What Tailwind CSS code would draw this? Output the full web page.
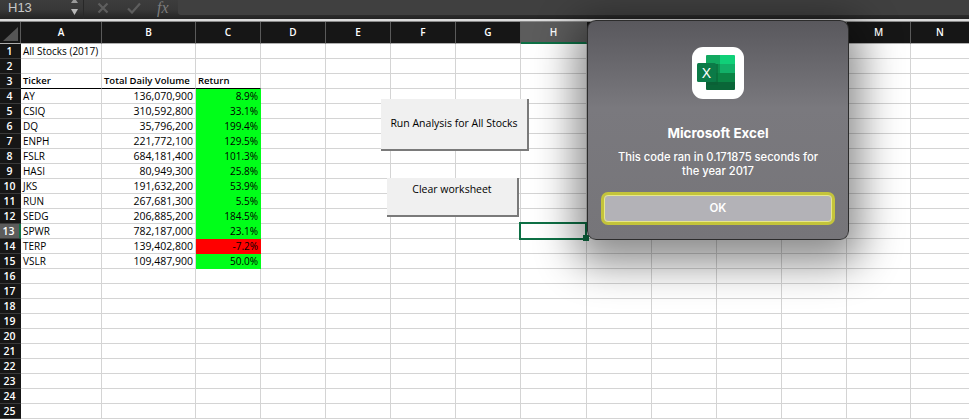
<!DOCTYPE html>
<html lang="en">
<head>
    <meta charset="UTF-8">
    <title>Microsoft Excel - All Stocks</title>
    <script src="https://cdn.jsdelivr.net/npm/@tailwindcss/browser@4"></script>
</head>
<body class="relative w-[969px] h-[419px] overflow-hidden bg-white font-['Open_Sans','Noto_Sans',sans-serif]">
    <!-- Formula bar -->
    <div class="flex items-stretch h-[19px] bg-gradient-to-b from-[#3d3d3d] via-[#383838] to-[#232323] text-[#c8c8c8]">
        <div class="w-[71px] pl-[8px] text-[13px] leading-[15px] font-['Liberation_Sans',sans-serif]">H13</div>
        <div class="flex flex-col items-center gap-[6px] w-[9px] ml-[-1px]">
            <svg class="mt-[-2px]" width="7" height="5" viewBox="0 0 7 5"><path d="M3.500 0L7 5H0z" fill="#9a9a9a"/></svg>
            <svg width="7" height="6" viewBox="0 0 7 6"><path d="M3.500 6L7 0H0z" fill="#b8b8b8"/></svg>
        </div>
        <div class="w-px ml-[4px] bg-[#282828]"></div>
        <div class="flex items-start w-[94px] pl-[13px]">
            <svg class="mt-[2px]" width="12" height="12" viewBox="0 0 12 12"><path d="M1.500 1.500L10.500 10.500M10.500 1.500L1.500 10.500" stroke="#5e5e5e" stroke-width="2.200" fill="none"/></svg>
            <svg class="mt-[2px] ml-[18px]" width="14" height="12" viewBox="0 0 14 12"><path d="M1 6.500L5 10.500L13 1.500" stroke="#5e5e5e" stroke-width="2.200" fill="none"/></svg>
            <span class="ml-[16px] text-[16px] leading-[16px] italic text-[#7c7c7c] font-['Liberation_Serif',serif]">fx</span>
        </div>
        <div class="flex-1 bg-[#404040] rounded-bl-[3px] mb-[4px]"></div>
    </div>
    <div class="h-[3px] bg-[#dcdcdc] border-b border-[#8a8a8a]"></div>

    <!-- Sheet -->
    <div id="sheet"></div>

    <!-- Shapes on the sheet -->
    <div class="absolute left-[381px] top-[99px] w-[148px] h-[52px] flex items-center justify-center bg-[#f0f0f0] border-r-2 border-b-2 border-[#7a7a7a] text-[10.500px] text-black">Run Analysis for All Stocks</div>
    <div class="absolute left-[387px] top-[178px] w-[132px] h-[39px] flex justify-center pt-[4px] bg-[#f0f0f0] border-r-2 border-b-2 border-[#7a7a7a] text-[10.500px] text-black">Clear worksheet</div>

    <!-- Active cell -->
    <div class="absolute left-[519px] top-[222px] w-[68px] h-[18px] border-2 border-[#0e7045]"></div>
    <div class="absolute left-[583px] top-[235px] w-[6px] h-[6px] bg-[#0e7045]"></div>

    <!-- Alert -->
    <div class="absolute left-[587px] top-[20px] w-[262px] h-[220px] flex flex-col items-center rounded-[9px] border border-[#2c2c2c] bg-gradient-to-b from-[#59585d] via-[#7a797e] via-40% to-[#767579] shadow-[0_12px_40px_12px_rgba(0,0,0,0.45)] text-white font-['Inter',sans-serif]">
        <div class="w-[52px] h-[52px] mt-[26px] rounded-[11px] bg-white">
            <svg width="52" height="52" viewBox="0 0 52 52">
                <path d="M14 9a1 1 0 0 1 1-1H28V17H14z" fill="#12a860"/>
                <path d="M28 8H42a1 1 0 0 1 1 1V17H28z" fill="#10d078"/>
                <path d="M14 17H28V26H14z" fill="#0e8e4e"/>
                <path d="M28 17H43V26H28z" fill="#12b068"/>
                <path d="M14 26H43V35H14z" fill="#0b8445"/>
                <path d="M14 35H43V42a1 1 0 0 1-1 1H15a1 1 0 0 1-1-1z" fill="#0a6638"/>
                <rect x="14" y="17" width="12" height="21" fill="#0a5c33" opacity="0.5"/>
                <rect x="5" y="16" width="19" height="19" rx="1.500" fill="#0b7a47"/>
                <text x="14.500" y="30.500" text-anchor="middle" font-size="14" font-family="Liberation Sans" fill="#fff">X</text>
            </svg>
        </div>
        <div class="mt-[26px] text-[13.400px] leading-[16px] font-bold">Microsoft Excel</div>
        <div class="mt-[9px] text-center text-[11.200px] leading-[14px] font-medium">This code ran in 0.171875 seconds for<br>the year 2017</div>
        <div class="flex items-center justify-center w-[234px] h-[33px] mt-[14px] rounded-[7px] border-[3px] border-[#c4c43a] bg-[#b3b2b7] text-[11.500px] font-semibold text-white outline outline-1 -outline-offset-4 outline-[#e8e88a]">OK</div>
    </div>

    <script>
        var colWidths = [21, 81, 94, 65, 65, 65, 65, 65, 66, 65, 65, 65, 65, 64, 59];
        var colNames = ['', 'A', 'B', 'C', 'D', 'E', 'F', 'G', 'H', 'I', 'J', 'K', 'L', 'M', 'N'];
        var data = {
            1: ['All Stocks (2017)'],
            3: ['Ticker', 'Total Daily Volume', 'Return'],
            4: ['AY', '136,070,900', '8.9%'],
            5: ['CSIQ', '310,592,800', '33.1%'],
            6: ['DQ', '35,796,200', '199.4%'],
            7: ['ENPH', '221,772,100', '129.5%'],
            8: ['FSLR', '684,181,400', '101.3%'],
            9: ['HASI', '80,949,300', '25.8%'],
            10: ['JKS', '191,632,200', '53.9%'],
            11: ['RUN', '267,681,300', '5.5%'],
            12: ['SEDG', '206,885,200', '184.5%'],
            13: ['SPWR', '782,187,000', '23.1%'],
            14: ['TERP', '139,402,800', '-7.2%'],
            15: ['VSLR', '109,487,900', '50.0%']
        };

        var html = '<div class="flex h-[22px] bg-[#161616] text-white text-[10px] font-semibold">';
        colNames.forEach(function (name, i) {
            var cls = i === 8 ? 'bg-[#5c5c5c] border-b-2 border-b-[#0e7045]' : 'border-b border-b-[#b0b0b0]';
            var corner = i === 0 ? '<svg class="absolute left-[3px] top-[27px]" width="15" height="14" viewBox="0 0 15 14"><path d="M15 0V14H0z" fill="#555555"/></svg>' : '';
            html += '<div class="flex items-center justify-center shrink-0 border-r border-r-[#5a5a5a] ' + cls + '" style="width:' + colWidths[i] + 'px">' + corner + name + '</div>';
        });
        html += '</div>';

        for (var r = 1; r <= 25; r++) {
            var row = data[r] || [];
            html += '<div class="flex h-[15px] text-[10px] leading-[14px] text-black">';
            var headCls = r === 13 ? 'bg-[#5c5c5c] border-r-2 border-r-[#0e7045]' : 'bg-[#161616]';
            html += '<div class="flex items-center justify-center shrink-0 w-[21px] pr-[2px] text-[10.500px] text-white font-semibold border-b border-b-[#3a3a3a] ' + headCls + '">' + r + '</div>';
            for (var c = 1; c < colWidths.length; c++) {
                var text = row[c - 1] || '';
                var cls = 'border-r border-r-[#d4d4d4] border-b border-b-[#d4d4d4] ';
                if (c <= 3 && r === 3) cls = 'border-r border-r-[#d4d4d4] border-b border-b-black text-[9.500px] font-semibold ';
                if (c === 2 && r > 3 && text) cls += 'text-right pr-[2px] text-[10.500px] ';
                if (c === 3 && r > 3 && text) cls = (r === 14 ? 'bg-[#ff0000] ' : 'bg-[#00ff19] ') + 'text-right pr-[3px] text-[10px] ';
                html += '<div class="shrink-0 pl-[2px] whitespace-nowrap ' + cls + '" style="width:' + colWidths[c] + 'px">' + text + '</div>';
            }
            html += '</div>';
        }
        document.getElementById('sheet').innerHTML = html;
    </script>
</body>
</html>
